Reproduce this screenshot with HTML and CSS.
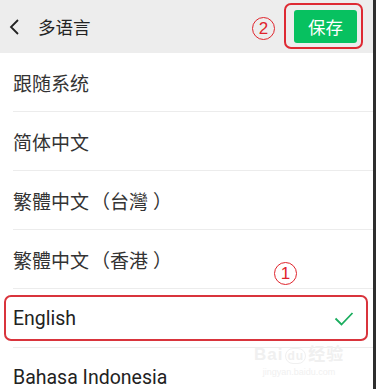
FILE: index.html
```html
<!DOCTYPE html>
<html lang="zh">
<head>
<meta charset="utf-8">
<title>多语言</title>
<link rel="stylesheet" href="styles.css">
</head>
<body>
<div class="screen">
  <div class="app">
    <header class="bar">
      <svg class="back" width="12" height="18" viewBox="0 0 12 18"><polyline points="9,2 2,9 9,16" fill="none" stroke="#222" stroke-width="1.8"/></svg>
      <span class="title">多语言</span>
      <span class="spacer"></span>
      <span class="mark mark-2">2</span>
      <span class="save-wrap"><button class="save">保存</button></span>
    </header>
    <ul class="list">
      <li class="row">跟随系统</li>
      <li class="row">简体中文</li>
      <li class="row">繁體中文<span class="po">（</span>台灣<span class="pc">）</span></li>
      <li class="row">繁體中文<span class="po">（</span>香港<span class="pc">）</span><span class="mark mark-1">1</span></li>
      <li class="row selected">
        <span class="latin">English</span>
        <svg class="check" width="20" height="16" viewBox="0 0 20 16"><polyline points="1.5,7.5 7.5,13.5 18.5,2" fill="none" stroke="#1aad5e" stroke-width="1.8"/></svg>
      </li>
      <li class="row"><span class="latin">Bahasa Indonesia</span></li>
    </ul>
    <div class="watermark"><span class="wm-top">Bai<span class="wm-du">du</span>经验</span><span class="wm-url">jingyan.baidu.com</span></div>
  </div>
  <div class="edge"></div>
</div>
</body>
</html>
```
FILE: styles.css
```css
html, body {
  margin: 0;
  padding: 0;
  background: #ffffff;
}
.screen {
  display: flex;
  width: 376px;
  height: 389px;
  overflow: hidden;
}
.app {
  position: relative;
  flex: 1;
  font-family: Roboto, "Noto Sans CJK SC", sans-serif;
  color: #333333;
}
.edge {
  width: 3px;
  background: #2e2e2e;
}
.bar {
  height: 53px;
  background: #ededed;
  display: flex;
  align-items: center;
  padding: 0 16px 0 9px;
  box-sizing: border-box;
}
.back {
  display: block;
}
.title {
  margin-left: 17px;
  font-family: "Noto Sans CJK SC", sans-serif;
  font-size: 17.5px;
  color: #222;
}
.spacer {
  flex: 1;
}
.mark {
  width: 21px;
  height: 21px;
  border: 1.5px solid #e0242c;
  border-radius: 50%;
  color: #e0242c;
  font-family: "Liberation Sans", sans-serif;
  font-size: 17px;
  line-height: 21px;
  text-align: center;
}
.mark-2 {
  margin-right: 19px;
  margin-top: 3px;
}
.mark-1 {
  position: absolute;
  left: 274px;
  top: 32px;
}
.save-wrap {
  position: relative;
  display: block;
}
.save-wrap::after {
  content: "";
  position: absolute;
  left: -10px;
  right: -6px;
  top: -7px;
  bottom: -6px;
  border: 2px solid #de2a33;
  border-radius: 7px;
}
.save {
  display: block;
  width: 63px;
  height: 33px;
  border: none;
  border-radius: 3px;
  background: #07c160;
  color: #ffffff;
  font-family: "Noto Sans CJK SC", sans-serif;
  font-size: 17.5px;
  padding: 0;
}
.list {
  list-style: none;
  margin: 0;
  padding: 0;
}
.row {
  position: relative;
  height: 59px;
  display: flex;
  align-items: center;
  padding-left: 13px;
  font-family: "Noto Sans CJK SC", sans-serif;
  font-size: 19px;
  color: #333;
}
.row::after {
  content: "";
  position: absolute;
  left: 13px;
  right: 0;
  bottom: 0;
  height: 1px;
  background: #ececec;
}
.po {
  margin-left: 2px;
}
.pc {
  margin-left: 5px;
}
.latin {
  font-family: Roboto, sans-serif;
  font-size: 19.5px;
  color: #222;
}
.selected {
  justify-content: space-between;
  padding-right: 19px;
}
.selected::before {
  content: "";
  position: absolute;
  left: 4px;
  right: 5px;
  top: 6px;
  bottom: 7px;
  border: 2px solid #d9343c;
  border-radius: 7px;
}
.check {
  display: block;
}
.watermark {
  position: absolute;
  left: 254px;
  top: 340px;
  display: flex;
  flex-direction: column;
  align-items: center;
  color: #f0f0f0;
  pointer-events: none;
}
.wm-top {
  font-family: "Liberation Sans", "Noto Sans CJK SC", sans-serif;
  font-size: 17px;
  font-weight: bold;
  letter-spacing: 1px;
}
.wm-du {
  font-size: 12px;
  border: 1px solid #f0f0f0;
  border-radius: 8px;
  padding: 0 1px;
  margin: 0 2px;
}
.wm-url {
  font-family: "Liberation Sans", sans-serif;
  font-size: 9px;
  margin-top: 2px;
}
```
